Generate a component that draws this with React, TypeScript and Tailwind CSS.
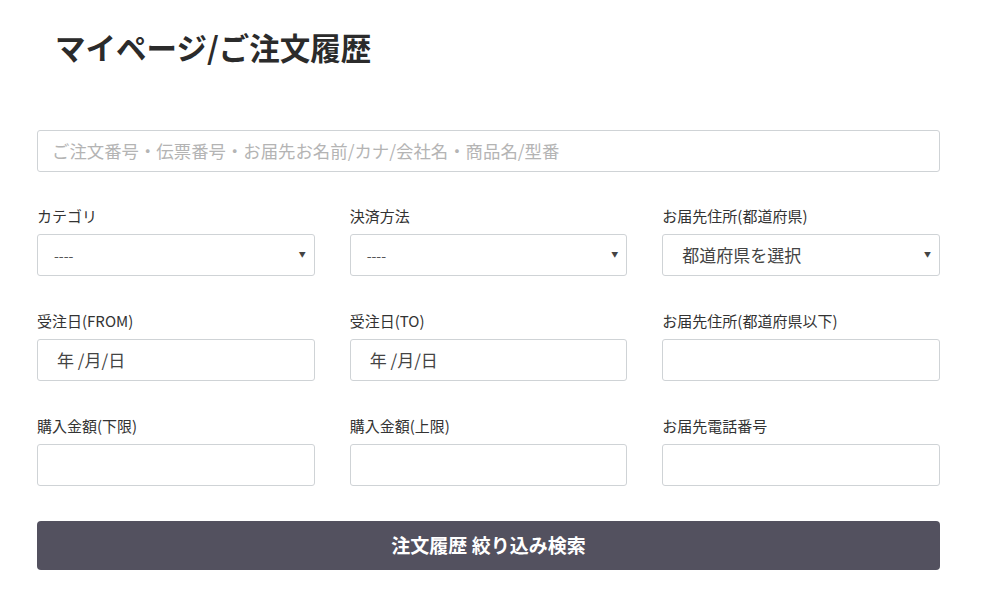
import React from "react";

type FieldProps = {
  label: string;
  children: React.ReactNode;
};

const Field = ({ label, children }: FieldProps) => (
  <div className="flex flex-col">
    <label className="h-5 mb-2 text-[15px] leading-5 text-[#333]">{label}</label>
    {children}
  </div>
);

const SelectBox = ({ value, big }: { value: string; big?: boolean }) => (
  <div className="relative h-[42px] rounded-[3px] border border-[#cfd3d6] bg-white flex items-center">
    <span className={big ? "pl-[19px] text-[17px] text-[#444]" : "pl-[16px] text-[14px] text-[#555]"}>{value}</span>
    <span className="absolute right-[8px] top-[15px] text-[7px] leading-[8px] text-[#444]">▼</span>
  </div>
);

const TextBox = ({ value }: { value?: string }) => (
  <div className="h-[42px] rounded-[3px] border border-[#cfd3d6] bg-white flex items-center">
    {value && <span className="pl-[19px] text-[17px] text-[#444]">{value}</span>}
  </div>
);

export default function App() {
  return (
    <div
      className="min-h-[600px] bg-white pt-[26px]"
      style={{ fontFamily: '"Noto Sans CJK JP", "Noto Sans", sans-serif' }}
    >
      <h1 className="ml-[55px] text-[30.5px] leading-[42px] font-bold text-[#2b2b2b]">マイページ/ご注文履歴</h1>

      <div className="ml-[37px] w-[903px] mt-[62px]">
        <div className="h-[42px] rounded-[3px] border border-[#cfd3d6] bg-white flex items-center">
          <span className="pl-[14px] text-[17.4px] text-[#b4b4b4]">ご注文番号・伝票番号・お届先お名前/カナ/会社名・商品名/型番</span>
        </div>

        <div className="mt-[34px] grid grid-cols-3 gap-x-[35px] gap-y-[35px]">
          <Field label="カテゴリ">
            <SelectBox value="----" />
          </Field>
          <Field label="決済方法">
            <SelectBox value="----" />
          </Field>
          <Field label="お届先住所(都道府県)">
            <SelectBox value="都道府県を選択" big />
          </Field>

          <Field label="受注日(FROM)">
            <TextBox value="年 /月/日" />
          </Field>
          <Field label="受注日(TO)">
            <TextBox value="年 /月/日" />
          </Field>
          <Field label="お届先住所(都道府県以下)">
            <TextBox />
          </Field>

          <Field label="購入金額(下限)">
            <TextBox />
          </Field>
          <Field label="購入金額(上限)">
            <TextBox />
          </Field>
          <Field label="お届先電話番号">
            <TextBox />
          </Field>
        </div>

        <button className="mt-[35px] w-full h-[49px] rounded-[4px] bg-[#53515f] text-white text-[19px] font-bold">
          注文履歴 絞り込み検索
        </button>
      </div>
    </div>
  );
}
